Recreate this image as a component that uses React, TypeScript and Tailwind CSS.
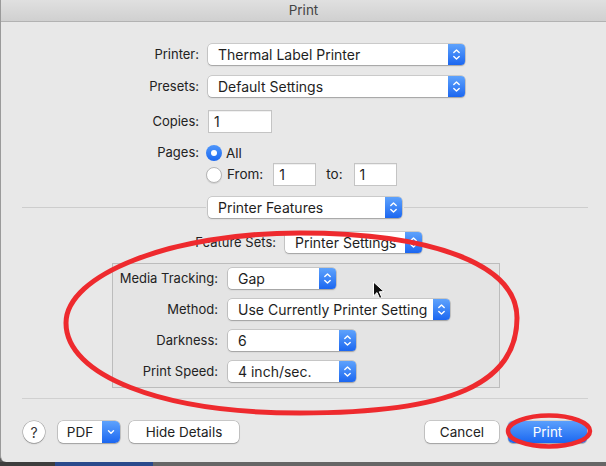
import React from "react";

const Chev = () => (
  <svg width="17" height="21" viewBox="0 0 17 21" fill="none" stroke="white" strokeWidth="1.4" strokeLinecap="round" strokeLinejoin="round">
    <path d="M5.8 8.6 L8.5 6 L11.2 8.6" />
    <path d="M5.8 12.4 L8.5 15 L11.2 12.4" />
  </svg>
);

function Popup({ className, text }: { className: string; text: string }) {
  return (
    <div className={`flex h-[21px] shrink-0 rounded-[4px] bg-white shadow-[0_0_0_0.5px_rgba(0,0,0,0.25),0_1px_1.5px_rgba(0,0,0,0.2)] ${className}`}>
      <div className="flex-1 overflow-hidden whitespace-nowrap pl-[10px] text-[14px] leading-[21px] text-[#1e1e1e]">{text}</div>
      <div className="flex w-[17px] items-center justify-center rounded-r-[4px] bg-gradient-to-b from-[#5ea2fc] to-[#1b66f0]">
        <Chev />
      </div>
    </div>
  );
}

function Field({ className }: { className: string }) {
  return (
    <div className={`h-[23px] shrink-0 border border-[#c4c4c4] bg-white pl-[5px] text-[14px] leading-[21px] text-[#1e1e1e] shadow-[inset_0_1px_0_rgba(0,0,0,0.06)] ${className}`}>1</div>
  );
}

function Btn({ className, children }: { className: string; children: React.ReactNode }) {
  return (
    <div className={`flex h-[22px] shrink-0 items-center justify-center rounded-[5px] bg-white text-[13.5px] text-[#222] shadow-[0_0_0_0.5px_rgba(0,0,0,0.28),0_1px_1.5px_rgba(0,0,0,0.2)] ${className}`}>
      {children}
    </div>
  );
}

export default function App() {
  return (
    <div className="relative h-[466px] w-[606px] overflow-hidden bg-[#595959]" style={{ fontFamily: "Inter, 'Liberation Sans', sans-serif" }}>
      <div className="flex h-[462px] flex-col rounded-bl-[6px] border-l border-[#9a9a9a] bg-[#e8e8e8] text-[#222]">
        {/* title bar */}
        <div className="flex h-[22px] items-center justify-center border-b border-[#b2b2b2] bg-gradient-to-b from-[#e0e0e0] to-[#d0d0d0] text-[13.5px] text-[#444]">
          Print
        </div>

        {/* Printer */}
        <div className="mt-[22px] flex items-center">
          <div className="w-[198px] text-right text-[13px]">Printer:</div>
          <Popup className="ml-[9px] w-[257px]" text="Thermal Label Printer" />
        </div>
        {/* Presets */}
        <div className="mt-[11px] flex items-center">
          <div className="w-[198px] text-right text-[13px]">Presets:</div>
          <Popup className="ml-[9px] w-[257px]" text="Default Settings" />
        </div>
        {/* Copies */}
        <div className="mt-[13px] flex items-center">
          <div className="w-[198px] text-right text-[13px]">Copies:</div>
          <Field className="ml-[9px] w-[64px]" />
        </div>
        {/* Pages */}
        <div className="mt-[11px] flex h-[18px] items-center">
          <div className="w-[198px] text-right text-[13px]">Pages:</div>
          <div className="ml-[7px] flex h-[16px] w-[16px] items-center justify-center rounded-full bg-gradient-to-b from-[#4e96fb] to-[#1c68f0]">
            <div className="h-[6px] w-[6px] rounded-full bg-white" />
          </div>
          <div className="ml-[4px] text-[13.5px]">All</div>
        </div>
        <div className="mt-[1px] flex h-[23px] items-center">
          <div className="w-[198px]" />
          <div className="ml-[7px] h-[16px] w-[16px] rounded-full border border-[#b5b5b5] bg-white shadow-[0_1px_1px_rgba(0,0,0,0.1)]" />
          <div className="ml-[5px] text-[13.5px]">From:</div>
          <Field className="ml-[10px] w-[43px]" />
          <div className="ml-[10px] text-[13.5px]">to:</div>
          <Field className="ml-[11px] w-[43px]" />
        </div>

        {/* separator with Printer Features */}
        <div className="mt-[11px] flex items-center pl-[21px] pr-[18px]">
          <div className="h-px flex-1 bg-[#cdcdcd]" />
          <Popup className="mx-[2px] w-[194px]" text="Printer Features" />
          <div className="h-px flex-1 bg-[#cdcdcd]" />
        </div>

        {/* Feature Sets */}
        <div className="mt-[14px] flex items-center">
          <div className="w-[275px] text-right text-[13px]">Feature Sets:</div>
          <Popup className="ml-[9px] w-[137px]" text="Printer Settings" />
        </div>

        {/* group box */}
        <div className="ml-[111px] mt-[10px] flex h-[125px] w-[388px] flex-col gap-[10px] border border-[#bcbcbc] bg-[#e4e4e4] pt-[4px]">
          <div className="flex items-center">
            <div className="w-[105px] text-right text-[13px]">Media Tracking:</div>
            <Popup className="ml-[10px] w-[108px]" text="Gap" />
          </div>
          <div className="flex items-center">
            <div className="w-[105px] text-right text-[13px]">Method:</div>
            <Popup className="ml-[10px] w-[222px]" text="Use Currently Printer Setting" />
          </div>
          <div className="flex items-center">
            <div className="w-[105px] text-right text-[13px]">Darkness:</div>
            <Popup className="ml-[10px] w-[128px]" text="6" />
          </div>
          <div className="flex items-center">
            <div className="w-[105px] text-right text-[13px]">Print Speed:</div>
            <Popup className="ml-[10px] w-[128px]" text="4 inch/sec." />
          </div>
        </div>

        {/* bottom separator */}
        <div className="ml-[21px] mr-[18px] mt-[10px] h-px bg-[#d0d0d0]" />

        {/* buttons */}
        <div className="mt-[22px] flex items-center pl-[22px] pr-[19px]">
          <div className="flex h-[22px] w-[22px] items-center justify-center rounded-full bg-white text-[14px] text-[#333] shadow-[0_0_0_0.5px_rgba(0,0,0,0.3),0_1px_1.5px_rgba(0,0,0,0.2)]">?</div>
          <div className="ml-[13px] flex h-[22px] w-[62px] rounded-[5px] bg-white shadow-[0_0_0_0.5px_rgba(0,0,0,0.28),0_1px_1.5px_rgba(0,0,0,0.2)]">
            <div className="flex flex-1 items-center justify-center text-[13.5px] text-[#222]">PDF</div>
            <div className="flex w-[18px] items-center justify-center rounded-r-[5px] bg-gradient-to-b from-[#5ea2fc] to-[#1b66f0]">
              <svg width="10" height="8" viewBox="0 0 10 8" fill="none" stroke="white" strokeWidth="1.4" strokeLinecap="round" strokeLinejoin="round">
                <path d="M2.5 2.8 L5 5.2 L7.5 2.8" />
              </svg>
            </div>
          </div>
          <Btn className="ml-[9px] w-[110px]">Hide Details</Btn>
          <div className="flex-1" />
          <Btn className="w-[74px]">Cancel</Btn>
          <div className="ml-[9px] flex h-[22px] w-[79px] items-center justify-center rounded-[5px] bg-gradient-to-b from-[#5a9ffc] to-[#1a66f0] text-[13.5px] text-white shadow-[0_0_0_0.5px_rgba(0,0,0,0.2),0_1px_1px_rgba(0,0,0,0.2)]">
            Print
          </div>
        </div>
      </div>
      {/* strip below window */}
      <div className="flex h-[4px]">
        <div className="w-[55px] bg-[#3d3d3d]" />
        <div className="w-[98px] bg-[#2a4a8c]" />
        <div className="flex-1 bg-[#666]" />
      </div>

      {/* annotations overlay */}
      <svg className="pointer-events-none absolute left-0 top-0" width="606" height="466" viewBox="0 0 606 466" fill="none">
        <path
          d="M66 323 C66 275 170 233 300 233 C434 233 517 265 517 318 C517 384 451 413 300 413 C160 413 66 375 66 323 Z"
          stroke="#ee2a2e"
          strokeWidth="5"
        />
        <ellipse cx="549" cy="431" rx="41" ry="15.5" stroke="#ee2a2e" strokeWidth="4.5" />
        <path d="M373.5 282 L373.5 296 L377 292.6 L379.6 298.4 L381.8 297.4 L379.3 291.8 L384 291.6 Z" fill="#111" stroke="white" strokeWidth="1" strokeLinejoin="round" />
      </svg>
    </div>
  );
}
